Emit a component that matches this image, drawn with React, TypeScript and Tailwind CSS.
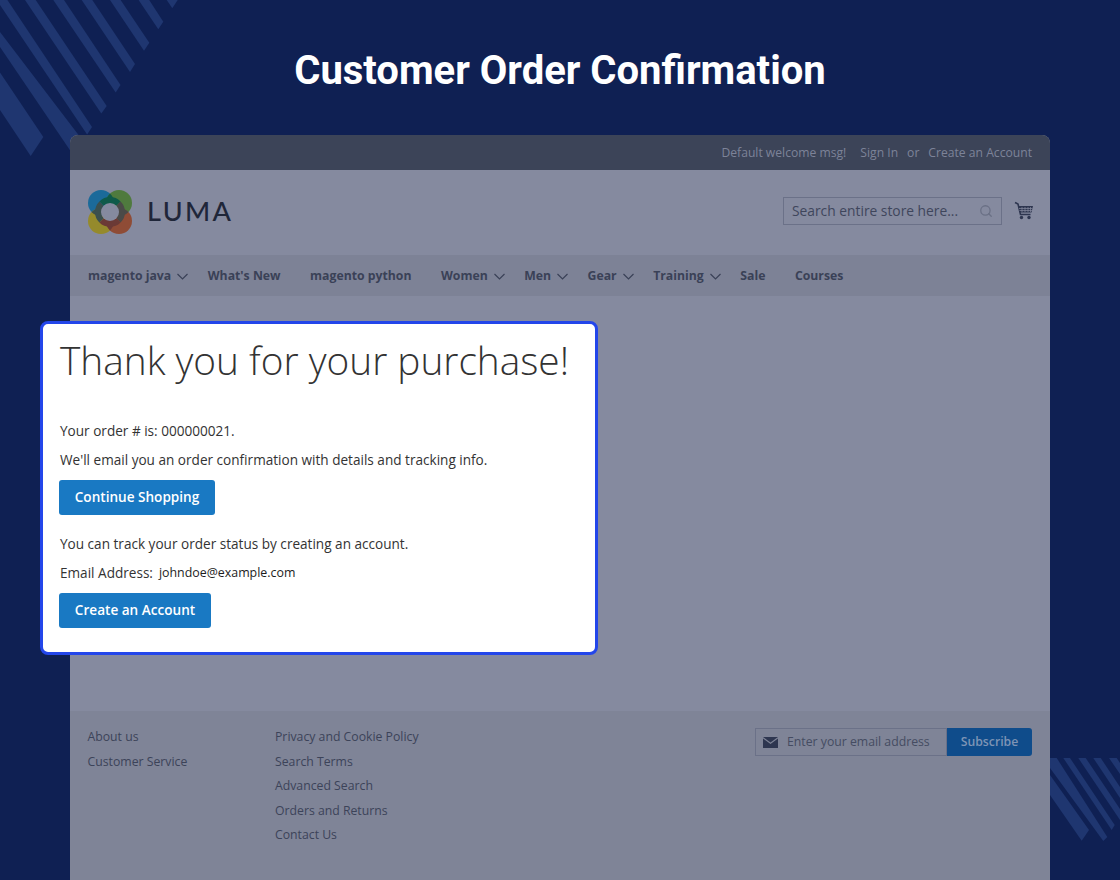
import { Search } from "lucide-react";

const navItems = [
  { label: "magento java", caret: true },
  { label: "What's New", caret: false },
  { label: "magento python", caret: false },
  { label: "Women", caret: true },
  { label: "Men", caret: true },
  { label: "Gear", caret: true },
  { label: "Training", caret: true },
  { label: "Sale", caret: false },
  { label: "Courses", caret: false },
];

const footerLinks = [
  ["About us", "Customer Service"],
  ["Privacy and Cookie Policy", "Search Terms", "Advanced Search", "Orders and Returns", "Contact Us"],
];

function TopLeftStripes() {
  return (
    <svg className="absolute left-0 top-0" width="200" height="170" viewBox="0 0 200 170" fill="#1f3670">
      <polygon points="166.7,0 177.7,0 172.3,8.3" />
      <polygon points="138.6,0 149.2,0 163.3,21.7 158.3,29.3" />
      <polygon points="110,0 120.6,0 149.3,42.7 144,50.7" />
      <polygon points="81.7,0 92.3,0 135,64 130,72" />
      <polygon points="53.3,0 64,0 120.5,85 115.7,92.5" />
      <polygon points="25,0 35.7,0 106.7,106 101.3,113.5" />
      <polygon points="0,5 0,0 7.4,0 92,127 87.1,134.5" />
      <polygon points="0,32 0,47 80,165 90,150" />
      <polygon points="0,72.4 43.3,137 30.7,156 0,110" />
    </svg>
  );
}

function BottomRightStripes() {
  return (
    <svg className="absolute left-[1050px] top-[758px]" width="70" height="122" viewBox="0 0 70 122" fill="#1f3670">
      <polygon points="0,17 39,72 31.7,82.7 0,37" />
      <polygon points="0,0 6.7,0 57.3,79 53.3,83 0,10" />
      <polygon points="13.3,0 20,0 64.7,67 61.7,72" />
      <polygon points="28.3,0 35.7,0 70,51 70,62" />
      <polygon points="43.3,0 50.7,0 70,29 70,40" />
      <polygon points="59,0 66.7,0 70,5 70,16" />
    </svg>
  );
}

function LumaLogo() {
  return (
    <svg width="44" height="44" viewBox="0 0 44 44" fill="none">
      <defs>
        <clipPath id="petal-blue"><circle cx="13" cy="13" r="13" /></clipPath>
        <clipPath id="petal-orange"><circle cx="31" cy="31" r="13" /></clipPath>
      </defs>
      <circle cx="13" cy="13" r="13" fill="#1b6a9a" />
      <circle cx="31" cy="13" r="13" fill="#4f7a3e" />
      <circle cx="13" cy="31" r="13" fill="#958a2c" />
      <circle cx="31" cy="31" r="13" fill="#8f4c36" />
      <g clipPath="url(#petal-blue)">
        <circle cx="31" cy="13" r="13" fill="#0f5a4a" />
        <circle cx="13" cy="31" r="13" fill="#3b4f4e" />
      </g>
      <g clipPath="url(#petal-orange)">
        <circle cx="31" cy="13" r="13" fill="#4a4a48" />
        <circle cx="13" cy="31" r="13" fill="#6b3a36" />
      </g>
      <g strokeWidth="6">
        <path d="M13.510 13.510A12 12 0 0 1 30.490 13.510" stroke="#0f5a4a" />
        <path d="M30.490 13.510A12 12 0 0 1 30.490 30.490" stroke="#4a4a48" />
        <path d="M30.490 30.490A12 12 0 0 1 13.510 30.490" stroke="#6b3a36" />
        <path d="M13.510 30.490A12 12 0 0 1 13.510 13.510" stroke="#3b4f4e" />
      </g>
      <circle cx="22" cy="22" r="9" fill="#858a9f" />
    </svg>
  );
}

function CartIcon() {
  return (
    <svg width="20" height="20" viewBox="0 0 20 20" fill="none">
      <path d="M1 1.500l3 1.500 2.500 10.500h10" stroke="#2e3650" strokeWidth="1.600" />
      <path d="M4.500 5h14.500l-1.500 6.500H6z" fill="#2e3650" />
      <path d="M8 6v5M11 6v5M14 6v5M16.500 6v5M5 7.500h13.500M5.500 9.500h12.500" stroke="#858a9f" strokeWidth="0.700" />
      <circle cx="7.500" cy="16.500" r="1.700" fill="#2e3650" />
      <circle cx="15" cy="16.500" r="1.700" fill="#2e3650" />
    </svg>
  );
}

function Caret() {
  return (
    <svg className="ml-[6px]" width="11" height="7" viewBox="0 0 11 7" fill="none">
      <path d="M0.500 1l5 5 5-5" stroke="#3a4157" strokeWidth="1.200" />
    </svg>
  );
}

export default function App() {
  return (
    <div className="relative h-[880px] w-[1120px] overflow-hidden bg-[#0f2053] font-['Open_Sans',sans-serif]">
      <TopLeftStripes />
      <BottomRightStripes />

      <h1 className="relative flex h-[135px] items-start justify-center pt-[45px] font-['Roboto',sans-serif] text-[40px] leading-[52px] font-bold text-white">
        Customer Order Confirmation
      </h1>

      <div className="relative mx-[70px] flex h-[745px] flex-col rounded-t-lg bg-[#858a9f]">
        <div className="flex h-[35px] items-center justify-end gap-[9px] rounded-t-lg bg-[#3c4458] px-[18px] pt-[1px] text-[12.150px] text-[#7d8398]">
          <span className="mr-[5px]">Default welcome msg!</span>
          <span>Sign In</span>
          <span>or</span>
          <span>Create an Account</span>
        </div>

        <header className="flex h-[85px] items-center justify-between pb-[4px] pl-[18px] pr-[16px]">
          <div className="mt-[2px] flex items-center gap-[15px]">
            <LumaLogo />
            <span className="font-['Lato',sans-serif] text-[27px] font-medium tracking-[0.09em] text-[#1f2639]">LUMA</span>
          </div>
          <div className="flex items-center gap-[12px]">
            <div className="flex h-[28px] w-[219px] items-center justify-between border border-[#6b7188] pl-[8px] pr-[8px] pt-[1px] text-[13.800px] text-[#3f465c]">
              <span>Search entire store here...</span>
              <Search size={14} strokeWidth={2.200} className="text-[#6a7085]" />
            </div>
            <CartIcon />
          </div>
        </header>

        <nav className="flex h-[41px] items-center bg-[#7d8296] pl-[18px] pt-[2px] text-[12.250px] font-bold text-[#3a4157]">
          {navItems.map((item) => (
            <div key={item.label} className={item.caret ? "mr-[19.500px] flex items-center" : "mr-[29.500px] flex items-center"}>
              <span>{item.label}</span>
              {item.caret && <Caret />}
            </div>
          ))}
        </nav>

        <main className="flex-1" />

        <footer className="flex h-[169px] items-start justify-between bg-[#7f8497] pl-[17.500px] pr-[18px] pt-[17px] text-[12.250px] text-[#3c4359]">
          <div className="flex pt-[0.250px]">
            {footerLinks.map((col, i) => (
              <ul key={i} className={i === 0 ? "flex w-[187.500px] flex-col gap-[7px]" : "flex flex-col gap-[7px]"}>
                {col.map((link) => (
                  <li key={link} className="leading-[17.500px]">{link}</li>
                ))}
              </ul>
            ))}
          </div>
          <div className="flex h-[28px]">
            <div className="flex w-[192px] items-center border border-[#6b7188] pl-[7px] pt-[1px] text-[#454c62]">
              <svg width="15" height="11" viewBox="0 0 15 11" fill="#2e3650">
                <path d="M0 0h15L7.500 5.500z" />
                <path d="M0 1.500v9.500h15V1.500L7.500 7z" />
              </svg>
              <span className="ml-[9px]">Enter your email address</span>
            </div>
            <div className="flex w-[85px] items-center justify-center rounded-r-[3px] bg-[#0f4c8b] pt-[1px] font-semibold text-[#7e94b5]">
              Subscribe
            </div>
          </div>
        </footer>

        {/* the lit-up card sits over the dimmed page */}
        <div className="absolute left-[-30px] top-[186px] h-[334px] w-[558px] rounded-lg border-[3px] border-[#2346ea] bg-white pl-[16px] text-[13.580px] text-[#333333]">
          <h2 className="mt-[6px] mb-[31px] pl-[1px] font-light text-[38.800px] leading-[60px] whitespace-nowrap">Thank you for your purchase!</h2>
          <p className="pl-[1px] leading-[20px]">Your order # is: 000000021.</p>
          <p className="mt-[9px] pl-[1px] leading-[20px]">We'll email you an order confirmation with details and tracking info.</p>
          <button className="mt-[10px] flex h-[35px] w-[156px] items-center justify-center rounded-[3px] bg-[#1979c3] font-semibold text-white">
            Continue Shopping
          </button>
          <p className="mt-[19px] pl-[1px] leading-[20px]">You can track your order status by creating an account.</p>
          <p className="mt-[9px] flex items-center pl-[1px] leading-[20px]">
            Email Address:
            <span className="ml-[6px] text-[12.400px] text-[#1d1d1d]">johndoe@example.com</span>
          </p>
          <button className="mt-[10px] flex h-[35px] w-[152px] items-center justify-center rounded-[3px] bg-[#1979c3] font-semibold text-white">
            Create an Account
          </button>
        </div>
      </div>
    </div>
  );
}
